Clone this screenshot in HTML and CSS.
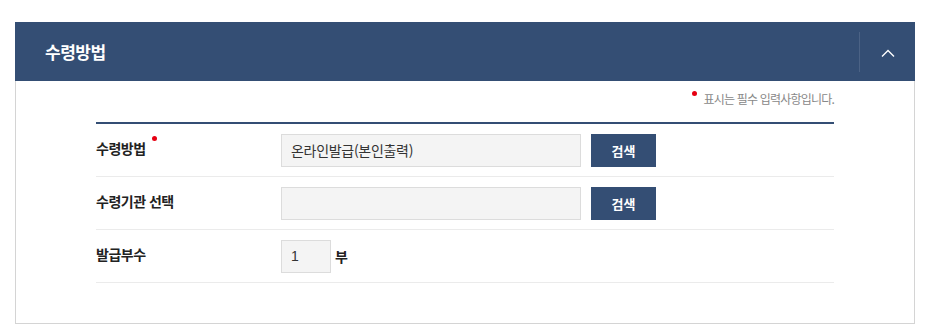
FILE: index.html
```html
<!DOCTYPE html>
<html lang="ko">
<head>
    <meta charset="UTF-8">
    <title>수령방법</title>
    <link rel="stylesheet" href="styles.css">
</head>
<body>
    <div class="panel">
        <!-- 상단 제목 -->
        <div class="panel-head">
            <h2 class="panel-title">수령방법</h2>
            <button class="toggle-btn" type="button" aria-label="접기">
                <svg width="14" height="8" viewBox="0 0 14 8"><polyline points="1,7.5 7,1.5 13,7.5" fill="none" stroke="#fff" stroke-width="1.4"/></svg>
            </button>
        </div>

        <div class="panel-body">
            <p class="req-note"><span class="req-dot"></span>표시는 필수 입력사항입니다.</p>

            <div class="form-table">
                <div class="form-row">
                    <div class="form-label">수령방법<span class="req-dot label-dot"></span></div>
                    <div class="form-field">
                        <input type="text" class="text-input" value="온라인발급(본인출력)" readonly>
                        <button class="search-btn" type="button">검색</button>
                    </div>
                </div>
                <div class="form-row">
                    <div class="form-label">수령기관 선택</div>
                    <div class="form-field">
                        <input type="text" class="text-input" readonly>
                        <button class="search-btn" type="button">검색</button>
                    </div>
                </div>
                <div class="form-row">
                    <div class="form-label">발급부수</div>
                    <div class="form-field">
                        <input type="text" class="qty-input" value="1">
                        <span class="unit">부</span>
                    </div>
                </div>
            </div>
        </div>
    </div>
</body>
</html>
```

FILE: styles.css
```css
body {
    margin: 0;
    padding: 22px 16px 0 15px;
    background-color: #fff;
    font-family: "Noto Sans CJK KR", "Noto Sans", sans-serif;
    color: #222;
}

.panel {
    width: 900px;
}

.panel-head {
    height: 59px;
    background-color: #344e74;
    display: flex;
    align-items: center;
    justify-content: space-between;
}

.panel-title {
    margin: 0 0 0 30px;
    font-size: 17px;
    font-weight: bold;
    color: #fff;
    letter-spacing: -0.5px;
}

.toggle-btn {
    width: 56px;
    height: 40px;
    border: none;
    border-left: 1px solid #4b6285;
    background: none;
    padding: 2px 0 0 0;
    display: flex;
    align-items: center;
    justify-content: center;
    cursor: pointer;
}

.panel-body {
    border: 1px solid #d4d4d4;
    border-top: none;
    padding: 9px 80px 40px 80px;
}

.req-note {
    margin: 0 0 14px 0;
    text-align: right;
    font-size: 12px;
    line-height: 18px;
    color: #888;
    letter-spacing: -0.8px;
}

.req-dot {
    display: inline-block;
    width: 5px;
    height: 5px;
    border-radius: 50%;
    background-color: #e60012;
    vertical-align: top;
    margin: 1px 6px 0 0;
}

.label-dot {
    margin: -2px 0 0 6px;
}

.form-table {
    border-top: 2px solid #344e74;
}

.form-row {
    display: flex;
    align-items: center;
    height: 52px;
    border-bottom: 1px solid #ebebeb;
}

.form-label {
    width: 185px;
    font-size: 14px;
    font-weight: bold;
    color: #222;
    letter-spacing: -0.5px;
    margin-top: -4px;
}

.form-field {
    display: flex;
    align-items: center;
}

.text-input,
.qty-input {
    height: 33px;
    box-sizing: border-box;
    border: 1px solid #dcdcdc;
    background-color: #f4f4f4;
    font-family: inherit;
    font-size: 14px;
    color: #333;
    padding: 0 9px;
    outline: none;
}

.text-input {
    width: 300px;
    letter-spacing: -0.3px;
}

.qty-input {
    width: 50px;
    font-family: "Liberation Sans", sans-serif;
}

.search-btn {
    width: 65px;
    height: 33px;
    margin-left: 10px;
    border: none;
    background-color: #344e74;
    color: #fff;
    font-family: inherit;
    font-size: 13px;
    font-weight: bold;
    cursor: pointer;
}

.unit {
    margin-left: 4px;
    font-size: 14px;
    font-weight: bold;
    color: #222;
}
```
